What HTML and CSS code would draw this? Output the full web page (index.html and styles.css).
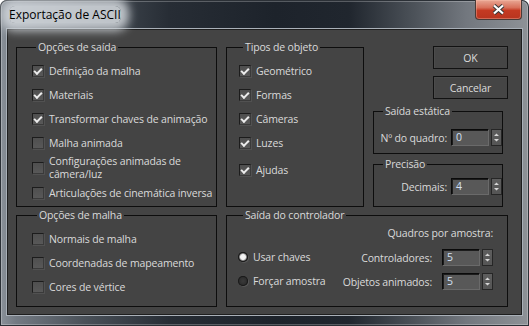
FILE: index.html
```html
<!DOCTYPE html>
<html lang="pt">

<head>
    <meta charset="UTF-8">
    <title>Exportação de ASCII</title>
    <link rel="stylesheet" href="styles.css">
</head>

<body>
    <div class="window">
        <div class="titlebar">
            <span class="title">Exportação de ASCII</span>
            <span class="close">
                <svg width="17" height="11" viewBox="0 0 17 11">
                    <path d="M4 1.5 13 9.5M13 1.5 4 9.5" stroke="#3a3a3a" stroke-width="4.2" />
                    <path d="M4 1.5 13 9.5M13 1.5 4 9.5" stroke="#ffffff" stroke-width="2.2" />
                </svg>
            </span>
        </div>

        <div class="client">
            <fieldset class="group saida">
                <legend>Opções de saída</legend>
                <div class="check"><span class="box on"></span>Definição da malha</div>
                <div class="check"><span class="box on"></span>Materiais</div>
                <div class="check"><span class="box on"></span>Transformar chaves de animação</div>
                <div class="check"><span class="box"></span>Malha animada</div>
                <div class="check tall"><span class="box"></span><span class="lines"><span>Configurações animadas de</span><span>câmera/luz</span></span></div>
                <div class="check"><span class="box"></span>Articulações de cinemática inversa</div>
            </fieldset>

            <fieldset class="group tipos">
                <legend>Tipos de objeto</legend>
                <div class="check"><span class="box on"></span>Geométrico</div>
                <div class="check"><span class="box on"></span>Formas</div>
                <div class="check"><span class="box on"></span>Câmeras</div>
                <div class="check"><span class="box on"></span>Luzes</div>
                <div class="check last"><span class="box on"></span>Ajudas</div>
            </fieldset>

            <div class="side">
                <button type="button" class="btn">OK</button>
                <button type="button" class="btn cancel">Cancelar</button>

                <fieldset class="group estatica">
                    <legend>Saída estática</legend>
                    <div class="field">
                        <span class="lbl">Nº do quadro:</span>
                        <span class="input">0</span>
                        <span class="spin"><svg width="9" height="15" viewBox="0 0 9 15"><path d="M2 6h5L4.5 3.5zM2 9h5l-2.5 2.5z" fill="#d6d6d6" /></svg></span>
                    </div>
                </fieldset>

                <fieldset class="group precisao">
                    <legend>Precisão</legend>
                    <div class="field">
                        <span class="lbl">Decimais:</span>
                        <span class="input">4</span>
                        <span class="spin"><svg width="9" height="15" viewBox="0 0 9 15"><path d="M2 6h5L4.5 3.5zM2 9h5l-2.5 2.5z" fill="#d6d6d6" /></svg></span>
                    </div>
                </fieldset>
            </div>

            <fieldset class="group malha">
                <legend>Opções de malha</legend>
                <div class="check"><span class="box"></span>Normais de malha</div>
                <div class="check"><span class="box"></span>Coordenadas de mapeamento</div>
                <div class="check"><span class="box"></span>Cores de vértice</div>
            </fieldset>

            <fieldset class="group controlador">
                <legend>Saída do controlador</legend>
                <div class="ctrl-body">
                    <div class="radios">
                        <div class="option"><span class="radio on"></span>Usar chaves</div>
                        <div class="option"><span class="radio"></span>Forçar amostra</div>
                    </div>
                    <div class="samples">
                        <div class="caption">Quadros por amostra:</div>
                        <div class="field first">
                            <span class="lbl">Controladores:</span>
                            <span class="input">5</span>
                            <span class="spin"><svg width="9" height="15" viewBox="0 0 9 15"><path d="M2 6h5L4.5 3.5zM2 9h5l-2.5 2.5z" fill="#d6d6d6" /></svg></span>
                        </div>
                        <div class="field second">
                            <span class="lbl">Objetos animados:</span>
                            <span class="input">5</span>
                            <span class="spin"><svg width="9" height="15" viewBox="0 0 9 15"><path d="M2 6h5L4.5 3.5zM2 9h5l-2.5 2.5z" fill="#d6d6d6" /></svg></span>
                        </div>
                    </div>
                </div>
            </fieldset>
        </div>
    </div>
</body>

</html>
```

FILE: styles.css
```css
* {
    box-sizing: border-box;
}

body {
    margin: 0;
    background: #ffffff;
    font-family: "Open Sans", "Liberation Sans", sans-serif;
    font-size: 10.5px;
    letter-spacing: -0.15px;
    color: #dadada;
}

.window {
    width: 529px;
    height: 326px;
    border-radius: 7px 7px 0 0;
    overflow: hidden;
    background: linear-gradient(90deg, #8a9199 0%, #737a83 3%, #4a5159 16%, #272d35 32%, #1d232b 52%, #20262e 66%, #4b5158 78%, #72777e 88%, #8e9297 100%);
    box-shadow: inset 0 0 0 1px #2b3036, inset 0 0 0 2px rgba(255, 255, 255, .25);
}

/* barra de título */
.titlebar {
    height: 29px;
    display: flex;
    align-items: center;
}

.title {
    margin-left: 9px;
    color: #000000;
    font-size: 12px;
    letter-spacing: 0;
    background: rgba(214, 218, 223, .85);
    box-shadow: 0 0 10px 8px rgba(214, 218, 223, .85);
    border-radius: 6px;
}

.close {
    margin-left: auto;
    margin-right: 7px;
    align-self: flex-start;
    width: 47px;
    height: 20px;
    display: flex;
    align-items: center;
    justify-content: center;
    border: 1px solid #4a3a36;
    border-top: 0;
    border-radius: 0 0 4px 4px;
    background: linear-gradient(#e9a895 0%, #d8705a 40%, #c43a22 55%, #b8341f 100%);
    box-shadow: inset 0 0 0 1px rgba(255, 200, 180, .35);
}

/* área do diálogo */
.client {
    margin: 0 7px;
    height: 286px;
    background: #444444;
    border: 1px solid #1e1e1e;
    box-shadow: 0 0 0 1px #a9b0b8;
    display: grid;
    grid-template-columns: 201px 138px 135px;
    grid-template-rows: 167px 99px;
    column-gap: 9px;
    row-gap: 1px;
    padding: 10px 0 0 8px;
}

.group {
    margin: 0;
    padding: 0;
    min-width: 0;
    border: 1px solid #0d0d0d;
}

.group legend {
    margin-left: 5px;
    padding: 0 2px;
    line-height: 14px;
}

.saida legend,
.tipos legend {
    margin-left: 4px;
}

.saida {
    padding: 5px 0 0 15px;
}

.tipos {
    padding: 5px 0 0 12px;
}

.malha {
    grid-column: 1;
    padding: 5px 0 0 15px;
}

.controlador {
    grid-column: 2 / 4;
    padding: 4px 14px 0 11px;
}

/* caixas de seleção */
.check {
    height: 24px;
    display: flex;
    align-items: center;
    white-space: nowrap;
}

.check.tall {
    height: 26px;
}

.lines {
    display: flex;
    flex-direction: column;
}

.lines span {
    height: 13px;
    line-height: 13px;
}

.check.last {
    margin-top: 3px;
}

.box {
    flex: none;
    width: 12px;
    height: 12px;
    margin-right: 5px;
    display: flex;
    align-items: center;
    justify-content: center;
    background: linear-gradient(#4f4f4f, #585858);
    border: 1px solid;
    border-color: #1c1c1c #3a3a3a #3a3a3a #1c1c1c;
    box-shadow: 1px 1px 0 #515151;
}

.box.on::after {
    content: "";
    width: 6px;
    height: 3px;
    margin-top: -2px;
    border-left: 2px solid #ececec;
    border-bottom: 2px solid #ececec;
    transform: rotate(-45deg);
}

/* coluna da direita */
.side {
    display: flex;
    flex-direction: column;
}

.btn {
    align-self: flex-end;
    width: 75px;
    height: 23px;
    margin-top: 6px;
    padding: 0;
    font: inherit;
    letter-spacing: inherit;
    color: #dcdcdc;
    background: #454545;
    border: 1px solid #121212;
    box-shadow: inset 1px 1px 0 #4c4c4c;
}

.btn.cancel {
    margin-top: 7px;
}

.estatica,
.precisao {
    width: 130px;
    height: 50px;
}

.estatica {
    margin-top: 5px;
    padding: 11px 0 0 4px;
}

.precisao {
    margin-top: 3px;
    padding: 7px 0 0 4px;
}

/* campos numéricos */
.field {
    height: 17px;
    display: flex;
    align-items: center;
    justify-content: flex-end;
    white-space: nowrap;
}

.field .lbl {
    margin-right: 4px;
}

.input {
    width: 38px;
    height: 17px;
    padding-left: 4px;
    line-height: 14px;
    color: #d2e0f4;
    background: #585858;
    border: 1px solid;
    border-color: #0a0a0a #6a6a6a #6a6a6a #0a0a0a;
    box-shadow: inset 1px 1px 0 #1c1c1c;
}

.spin {
    width: 11px;
    height: 17px;
    margin-left: 2px;
    background: linear-gradient(#5e5e5e, #555555);
    border: 1px solid #262626;
    display: flex;
}

/* saída do controlador */
.ctrl-body {
    display: flex;
    justify-content: space-between;
}

.radios {
    padding-top: 19px;
}

.option {
    height: 24px;
    display: flex;
    align-items: center;
}

.radio {
    width: 10px;
    height: 10px;
    margin-right: 5px;
    border-radius: 50%;
    background: radial-gradient(circle at 50% 50%, #3a3a3a 0, #2a2a2a 5px);
    box-shadow: inset 0 0 0 1px #1a1a1a, 1px 1px 0 #575757;
}

.radio.on {
    background: radial-gradient(circle at 50% 50%, #f6f6f6 0, #f0f0f0 2.5px, #8c8c8c 3.5px, #2a2a2a 4.5px);
}

.samples {
    display: flex;
    flex-direction: column;
    align-items: flex-end;
}

.caption {
    line-height: 14px;
}

.samples .field .lbl {
    margin-right: 10px;
}

.samples .field.first {
    margin-top: 9px;
}

.samples .field.second {
    margin-top: 7px;
}
```
